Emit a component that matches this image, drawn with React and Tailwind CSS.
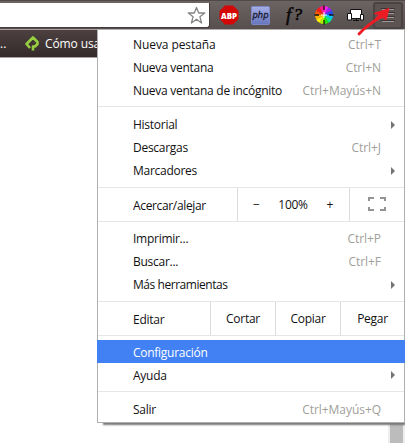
import React from 'react';

function Item({ label, shortcut, arrow, active, wide, low }) {
  return (
    <div className={`flex h-[23px] shrink-0 items-center pl-[35px] ${active ? '-mx-px bg-[#4281f4] pl-[36px] text-white' : ''}`}>
      <span className={`grow ${low ? 'pt-[3px]' : 'pt-px'} ${wide ? 'tracking-[-0.08px]' : ''}`}>{label}</span>
      {shortcut && <span className="pt-px pr-[23px] tracking-[-0.05px] text-[#a0a09a]">{shortcut}</span>}
      {arrow && (
        <svg className="mr-[9px]" width="4" height="8" viewBox="0 0 4 8">
          <path d="M0 0L4 4L0 8Z" fill="#747474" />
        </svg>
      )}
    </div>
  );
}

function Group({ children, className }) {
  return <div className={`flex flex-col ${className}`}>{children}</div>;
}

function PinWheel() {
  const colors = ['#ff20e8', '#9e1cff', '#234cff', '#00caff', '#00ee8b', '#26e500', '#b4ef00', '#fff000', '#ffb000', '#ff5700', '#ff1818', '#ff1893'];
  return (
    <svg width="20" height="20" viewBox="0 0 20 20">
      {colors.map((c, i) => (
        <path key={c} d="M10 10L10 1A9 9 0 0 1 14.6 2.25Z" fill={c} transform={`rotate(${i * 30} 10 10)`} />
      ))}
      <path d="M10 7v6M7 10h6" stroke="#fff" strokeWidth="1" />
      <path d="M10 .5v4.5M10 15v4.5M.5 10h4.5M15 10h4.5" stroke="#111" strokeWidth="1.3" />
    </svg>
  );
}

function Toolbar() {
  return (
    <div className="flex h-[29px] border-t border-[#50494a] bg-linear-to-b from-[#6c6463] to-[#574e4e]">
      <div className="mt-[2px] flex h-[25px] w-[210px] shrink-0 items-center justify-end rounded-br-[3px] border-r border-b border-[#443c3c] bg-white pr-[3px]">
        <svg width="19" height="19" viewBox="0 0 19 19" fill="none" stroke="#858585" strokeWidth="1.3" strokeLinejoin="round">
          <path d="M9.5 1.5L11.7 7H17.7L12.9 10.7L14.6 17L9.5 13.3L4.4 17L6.1 10.7L1.3 7H7.3Z" />
        </svg>
      </div>
      <div className="flex grow items-center pl-[9px]">
        <svg className="shrink-0" width="20" height="20" viewBox="0 0 20 20">
          <path d="M6 .5H14L19.5 6V14L14 19.5H6L.5 14V6Z" fill="#d40707" />
          <text x="10" y="13.6" textAnchor="middle" textLength="16" lengthAdjust="spacingAndGlyphs" fontFamily="Open Sans" fontSize="9.5" fontWeight="800" fill="white">ABP</text>
        </svg>
        <svg className="ml-[12px] shrink-0" width="19" height="19" viewBox="0 0 19 19">
          <defs>
            <linearGradient id="php" x1="0" y1="0" x2="0" y2="1"><stop stopColor="#a6aee4" /><stop offset="1" stopColor="#6575bd" /></linearGradient>
          </defs>
          <rect x=".5" y=".5" width="18" height="18" rx="1" fill="url(#php)" stroke="#7c87c4" />
          <text x="9.5" y="11.8" textAnchor="middle" textLength="16" lengthAdjust="spacingAndGlyphs" fontFamily="DejaVu Sans" fontStyle="italic" fontSize="9" fill="#16172d" stroke="#16172d" strokeWidth=".3">php</text>
        </svg>
        <svg className="ml-[13px] shrink-0" width="20" height="22" viewBox="0 0 20 22">
          <text x="3" y="16.5" fontFamily="Liberation Serif" fontStyle="italic" fontSize="19" fill="#080707" stroke="#080707" strokeWidth=".5">f</text>
          <text x="10.5" y="16" fontFamily="Liberation Serif" fontStyle="italic" fontSize="17" fill="#080707" stroke="#080707" strokeWidth=".7">?</text>
        </svg>
        <div className="ml-[11px] shrink-0"><PinWheel /></div>
        <svg className="ml-[13px] shrink-0" width="18" height="14" viewBox="0 0 18 14">
          <path d="M3.5 1.5H14.5V10.5H3.5Z" fill="white" stroke="#111" />
          <path d="M6 12.5H12M9.5 11V12" stroke="#111" />
          <path d="M.5 5.5H4.5V12H.5ZM13.5 6.5H16.5V12H13.5Z" fill="white" stroke="#111" />
        </svg>
        <div className="ml-[8px] flex h-[27px] w-[30px] shrink-0 items-center justify-center rounded-[3px] border-2 border-[#4a4343] bg-[#5c5453]">
          <svg className="shrink-0" width="16" height="16" viewBox="0 0 16 16">
            <path d="M1 1.5H15M1 5.5H15M1 9.5H15M1 13.5H15" stroke="#3a3534" />
            <path d="M2 2.5H14M2 6.5H14M2 10.5H14M2 14.5H14" stroke="#a09997" />
          </svg>
        </div>
      </div>
    </div>
  );
}

function Menu() {
  return (
    <div className="absolute top-[29px] left-[97px] flex h-[394px] w-[308px] flex-col border border-[#b0b0b0] bg-white text-[12px] tracking-[-0.27px] text-[#111]">
      <Group className="pt-[3px] pb-[4px]">
        <Item label="Nueva pestaña" shortcut="Ctrl+T" wide />
        <Item label="Nueva ventana" shortcut="Ctrl+N" />
        <Item label="Nueva ventana de incógnito" shortcut="Ctrl+Mayús+N" />
      </Group>
      <Group className="border-t border-[#e6e6e6] pt-[6px] pb-[5px]">
        <Item label="Historial" arrow />
        <Item label="Descargas" shortcut="Ctrl+J" />
        <Item label="Marcadores" arrow />
      </Group>
      <div className="flex h-[34px] shrink-0 items-center border-t border-[#e6e6e6]">
        <span className="w-[139px] pt-[3px] pl-[35px] tracking-[-0.35px]">Acercar/alejar</span>
        <div className="flex h-full w-[113px] items-center justify-between border-x border-[#dcdcdc] pr-[16px] pl-[15px]">
          <span>−</span><span className="tracking-[-0.3px]">100%</span><span>+</span>
        </div>
        <svg className="-mt-px ml-[18px]" width="18" height="14" viewBox="0 0 18 14" fill="none" stroke="#949494" strokeWidth="2">
          <path d="M1 4V1H6M12 1H17V4M17 10V13H12M6 13H1V10" />
        </svg>
      </div>
      <Group className="border-t border-[#e6e6e6] pt-[5px] pb-[5px]">
        <Item label="Imprimir..." shortcut="Ctrl+P" />
        <Item label="Buscar..." shortcut="Ctrl+F" />
        <div className="tracking-[-0.45px]"><Item label="Más herramientas" arrow /></div>
      </Group>
      <div className="flex h-[34px] shrink-0 items-center border-t border-[#e6e6e6]">
        <span className="w-[112px] pt-[3px] pl-[35px]">Editar</span>
        <span className="flex h-full w-[65px] items-center justify-center border-l border-[#dcdcdc]">Cortar</span>
        <span className="flex h-full w-[65px] items-center justify-center border-l border-[#dcdcdc]">Copiar</span>
        <span className="flex h-full grow items-center justify-center border-l border-[#dcdcdc]">Pegar</span>
      </div>
      <Group className="border-t border-[#e6e6e6] pt-[4px] pb-[5px]">
        <Item label="Configuración" active low />
        <Item label="Ayuda" arrow low />
      </Group>
      <Group className="border-t border-[#e6e6e6] pt-[6px]">
        <Item label="Salir" shortcut="Ctrl+Mayús+Q" />
      </Group>
    </div>
  );
}

export default function App() {
  return (
    <div className="relative flex h-[443px] w-[405px] flex-col overflow-hidden bg-white font-['Open_Sans',sans-serif]">
      <Toolbar />
      <div className="flex h-[29px] shrink-0 items-center border-y border-[#a99ea0] bg-linear-to-b from-[#4c4140] to-[#342a29] text-[12px] font-medium text-white">
        <span className="w-[24px]">..</span>
        <svg width="16" height="18" viewBox="0 0 16 18" fill="none" stroke="#98cf40" strokeWidth="2.6" strokeLinejoin="round">
          <path d="M6 13L2.5 9L9 2.5L13.5 7V9L11 11.5H9V15.5" />
        </svg>
        <span className="ml-[5px] tracking-[-0.1px] whitespace-nowrap">Cómo usar</span>
      </div>
      <div className="flex grow justify-end">
        <div className="flex w-[17px] justify-center bg-[#eeeeee] pr-px">
          <div className="w-[13px] bg-[#bcbcbc]" />
        </div>
      </div>
      <div className="absolute top-[421px] left-[104px] h-[2px] w-[301px] shadow-[0_1px_2px_1px_#777777]" />
      <Menu />
      <svg className="absolute top-0 left-[355px]" width="50" height="38" viewBox="0 0 50 38">
        <path d="M4 34Q12 25 28 15.5" fill="none" stroke="#ed1c24" strokeWidth="2.8" strokeLinecap="round" />
        <path d="M19 13.5L34 8.5L31 20L28 17.5L20 19.5L24 14.5Z" fill="#ed1c24" stroke="#ed1c24" strokeLinejoin="round" />
      </svg>
    </div>
  );
}
